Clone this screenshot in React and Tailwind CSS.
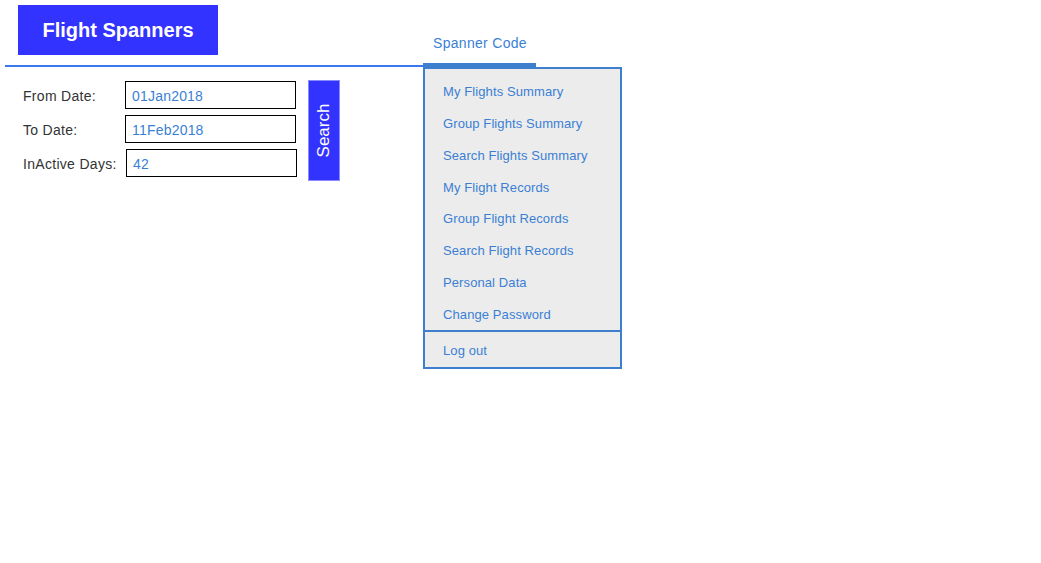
import { useState } from 'react';

const menuItems = [
  'My Flights Summary',
  'Group Flights Summary',
  'Search Flights Summary',
  'My Flight Records',
  'Group Flight Records',
  'Search Flight Records',
  'Personal Data',
  'Change Password',
];

const fields = [
  { label: 'From Date:', value: '01Jan2018', labelW: 'w-[102px]' },
  { label: 'To Date:', value: '11Feb2018', labelW: 'w-[102px]' },
  { label: 'InActive Days:', value: '42', labelW: 'w-[103px]' },
];

export default function App() {
  const [values, setValues] = useState(fields.map((f) => f.value));

  return (
    <div className="relative min-h-[563px] bg-white font-['Liberation_Sans',Arial,sans-serif]">
      {/* header */}
      <div className="flex">
        <div className="ml-[5px] w-[418px] h-[67px] border-b-2 border-[#3a78f0]">
          <div className="ml-[13px] mt-[5px] w-[200px] h-[50px] bg-[#3333ff] flex items-center justify-center">
            <span className="text-white text-[20px] font-bold leading-none">Flight Spanners</span>
          </div>
        </div>
        <div className="w-[113px] h-[67px] border-b-4 border-[#3d7fcc]">
          <p className="pl-[10px] pt-[34px] text-[14px] leading-[18px] tracking-[0.3px] text-[#3b7fd4]">Spanner Code</p>
        </div>
      </div>

      {/* dropdown */}
      <div className="absolute left-[423px] top-[67px] w-[199px] border-2 border-[#3d7fcc] bg-[#ececec]">
        <ul className="pt-[7px]">
          {menuItems.map((item) => (
            <li key={item} className="h-[31.8px] flex items-center pl-[18px] text-[13px] tracking-[0.1px] text-[#3b7fd4]">
              {item}
            </li>
          ))}
        </ul>
        <div className="border-t-2 border-[#3d7fcc] h-[37px] pt-[2px] flex items-center pl-[18px] text-[13px] tracking-[0.1px] text-[#3b7fd4]">
          Log out
        </div>
      </div>

      {/* search form */}
      <div className="flex items-start pl-[23px] pt-[14px]">
        <div className="flex flex-col gap-[6px]">
          {fields.map((f, i) => (
            <div key={f.label} className="flex items-center">
              <label className={`${f.labelW} pt-[2px] text-[14px] tracking-[0.3px] text-[#333333]`}>{f.label}</label>
              <input
                value={values[i]}
                onChange={(e) => setValues(values.map((v, j) => (j === i ? e.target.value : v)))}
                className="w-[171px] h-[28px] border border-black px-[6px] pt-[2px] text-[14px] tracking-[0.2px] text-[#3b7fd4] outline-none"
              />
            </div>
          ))}
        </div>
        <button className="ml-[11px] -mt-px w-[32px] h-[101px] bg-[#3333ff] border border-[#8a8aff] flex items-center justify-center">
          <span className="block -rotate-90 text-white text-[17px] leading-none whitespace-nowrap">Search</span>
        </button>
      </div>
    </div>
  );
}
